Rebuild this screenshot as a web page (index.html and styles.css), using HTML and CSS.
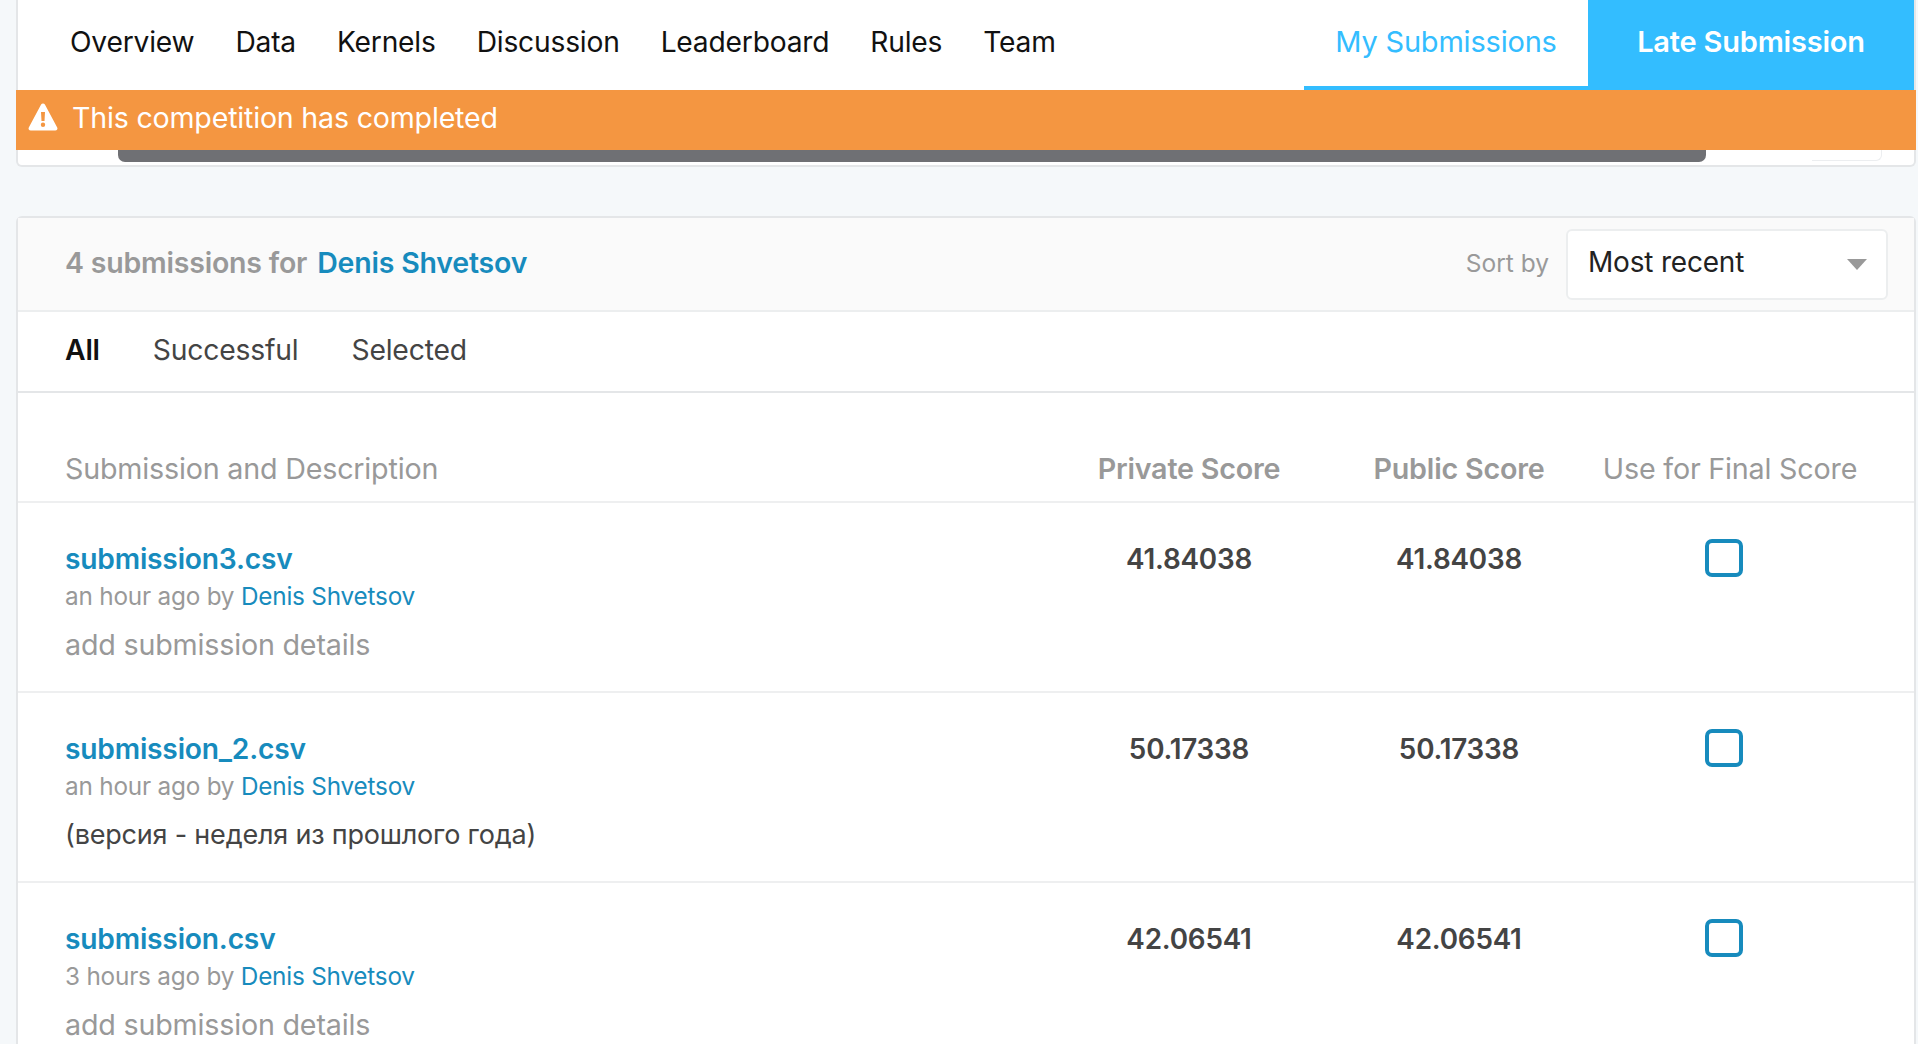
FILE: index.html
```html
<!DOCTYPE html>
<html lang="en">
<head>
<meta charset="utf-8">
<title>My Submissions</title>
<link rel="stylesheet" href="styles.css">
</head>
<body>
<section class="top-card">
  <nav class="nav">
    <ul class="nav-links">
      <li>Overview</li><li>Data</li><li>Kernels</li><li>Discussion</li><li>Leaderboard</li><li>Rules</li><li>Team</li>
    </ul>
    <a class="nav-mine">My Submissions</a>
    <a class="nav-late">Late Submission</a>
  </nav>
  <div class="alert">
    <svg class="alert-icon" viewBox="0 0 30 28" width="30" height="28" aria-hidden="true"><path fill="#fff" fill-rule="evenodd" d="M15 0.5c.8 0 1.5.4 1.9 1.100l12.300 23c.8 1.500-.2 3-1.900 3H2.700c-1.700 0-2.700-1.500-1.900-3l12.300-23c.4-.7 1.100-1.100 1.900-1.100zM13 9l.5 9h3l.5-9zM15 19.500a2.200 2.200 0 1 0 0 4.400a2.200 2.200 0 0 0 0-4.400z"/></svg>
    <span>This competition has completed</span>
  </div>
  <div class="under">
    <div class="under-bar"></div>
    <div class="under-box"></div>
  </div>
</section>

<section class="card">
  <header class="card-head">
    <h2 class="count">4 submissions for <a class="link">Denis Shvetsov</a></h2>
    <span class="sort-label">Sort by</span>
    <div class="select">
      <span>Most recent</span>
      <i class="caret"></i>
    </div>
  </header>
  <div class="tabs">
    <span class="tab tab-active">All</span>
    <span class="tab">Successful</span>
    <span class="tab">Selected</span>
  </div>
  <div class="row row-head">
    <div>Submission and Description</div>
    <div class="num strong">Private Score</div>
    <div class="num strong">Public Score</div>
    <div class="num">Use for Final Score</div>
  </div>
  <div class="row">
    <div>
      <a class="file">submission3.csv</a>
      <p class="meta">an hour ago by <a class="link-plain">Denis Shvetsov</a></p>
      <p class="desc">add submission details</p>
    </div>
    <div class="num score">41.84038</div>
    <div class="num score">41.84038</div>
    <div class="check-cell"><span class="check"></span></div>
  </div>
  <div class="row">
    <div>
      <a class="file">submission_2.csv</a>
      <p class="meta">an hour ago by <a class="link-plain">Denis Shvetsov</a></p>
      <p class="desc desc-filled">(версия - неделя из прошлого года)</p>
    </div>
    <div class="num score">50.17338</div>
    <div class="num score">50.17338</div>
    <div class="check-cell"><span class="check"></span></div>
  </div>
  <div class="row">
    <div>
      <a class="file">submission.csv</a>
      <p class="meta">3 hours ago by <a class="link-plain">Denis Shvetsov</a></p>
      <p class="desc">add submission details</p>
    </div>
    <div class="num score">42.06541</div>
    <div class="num score">42.06541</div>
    <div class="check-cell"><span class="check"></span></div>
  </div>
</section>
</body>
</html>
```

FILE: styles.css
```css
* { box-sizing: border-box; }
html, body { height: 100%; overflow: hidden; }
body {
  margin: 0;
  padding: 0 2px 0 16px;
  background: #f5f8fa;
  font-family: Inter, "Liberation Sans", sans-serif;
  color: #333;
}
p, h2, ul { margin: 0; padding: 0; }

.top-card {
  background: #fff;
  border: 2px solid #e4e6e8;
  border-top: 0;
  border-radius: 0 0 6px 6px;
  height: 167px;
}
.nav { display: flex; height: 90px; margin: 0 0 0 -2px; }
.nav-links {
  display: flex;
  flex: 1;
  gap: 41px;
  padding-left: 54px;
  align-items: center;
  list-style: none;
  font-size: 28.2px;
  letter-spacing: -0.2px;
  color: #111;
  height: 84px;
}
.nav-mine {
  width: 284px;
  height: 90px;
  padding-bottom: 4px;
  display: flex;
  align-items: center;
  justify-content: center;
  font-size: 29px;
  letter-spacing: -0.2px;
  color: #33bdff;
  border-bottom: 4px solid #33bdff;
}
.nav-late {
  width: 326px;
  height: 90px;
  padding-bottom: 8px;
  display: flex;
  align-items: center;
  justify-content: center;
  font-size: 29px;
  font-weight: 600;
  letter-spacing: -0.2px;
  color: #fff;
  background: #33bdff;
}
.alert {
  display: flex;
  align-items: center;
  gap: 14px;
  height: 60px;
  margin: 0 -2px;
  padding: 0 0 6px 12px;
  background: #f49641;
  color: #fff;
  font-size: 28.6px;
  letter-spacing: -0.2px;
}
.alert-icon { flex: none; }
.under { display: flex; height: 15px; padding-left: 100px; }
.under-bar {
  width: 1588px;
  height: 12px;
  background: #6f7074;
  border-radius: 0 0 7px 7px;
}
.under-box {
  width: 70px;
  height: 11px;
  margin-left: 106px;
  border: 1px solid #eceef0;
  border-top: 0;
  border-left: 0;
  border-radius: 0 0 6px 0;
}

.card {
  margin-top: 49px;
  background: #fff;
  border: 2px solid #e4e6e8;
  border-radius: 6px 6px 0 0;
}
.card-head {
  display: flex;
  align-items: center;
  height: 94px;
  padding: 0 26px 0 47px;
  background: #fafafa;
  border-bottom: 2px solid #eceeef;
}
.count {
  flex: 1;
  padding-bottom: 4px;
  font-size: 28.5px;
  font-weight: 600;
  letter-spacing: -0.2px;
  color: #999;
}
.link, .link-plain { color: #178bbd; }
.link { margin-left: 3px; }
.sort-label { font-size: 24.5px; color: #999; margin-right: 17px; padding-bottom: 2px; }
.select {
  display: flex;
  align-items: center;
  justify-content: space-between;
  width: 322px;
  height: 71px;
  padding: 0 19px 0 20px;
  background: #fff;
  border: 2px solid #eceeef;
  border-radius: 6px;
  font-size: 28px;
  letter-spacing: -0.2px;
  color: #222;
}
.select span { padding-bottom: 4px; }
.caret {
  width: 0;
  height: 0;
  border: 10px solid transparent;
  border-top: 11px solid #999;
  border-bottom: 0;
}
.tabs {
  display: flex;
  gap: 53px;
  align-items: center;
  height: 81px;
  padding: 0 0 3px 47px;
  border-bottom: 2px solid #e4e6e8;
  font-size: 28.3px;
  letter-spacing: -0.2px;
  color: #444;
}
.tab-active { color: #111; font-weight: 600; }

.row {
  display: grid;
  grid-template-columns: 1fr 270px 270px 272px;
  height: 190px;
  padding: 38px 48px 0 47px;
  border-bottom: 2px solid #eeeff0;
}
.row-head {
  height: 110px;
  padding-top: 58px;
  font-size: 28.7px;
  letter-spacing: -0.2px;
  color: #999;
}
.num { text-align: center; }
.strong { font-weight: 600; }
.file { display: block; font-size: 28.2px; font-weight: 600; letter-spacing: -0.2px; color: #178bbd; line-height: 36px; }
.meta { font-size: 24.3px; letter-spacing: -0.2px; color: #999; line-height: 36px; margin-top: 1px; }
.desc { font-size: 28.7px; letter-spacing: -0.2px; color: #999; line-height: 36px; margin-top: 13px; }
.desc-filled { font-size: 27px; color: #444; }
.score { font-size: 27.8px; font-weight: 600; letter-spacing: -0.2px; color: #444; line-height: 36px; }
.check-cell { display: flex; justify-content: center; align-items: flex-start; padding-right: 12px; }
.check {
  display: block;
  width: 38px;
  height: 38px;
  margin-top: -2px;
  border: 4px solid #178bbd;
  border-radius: 7px;
}
```
